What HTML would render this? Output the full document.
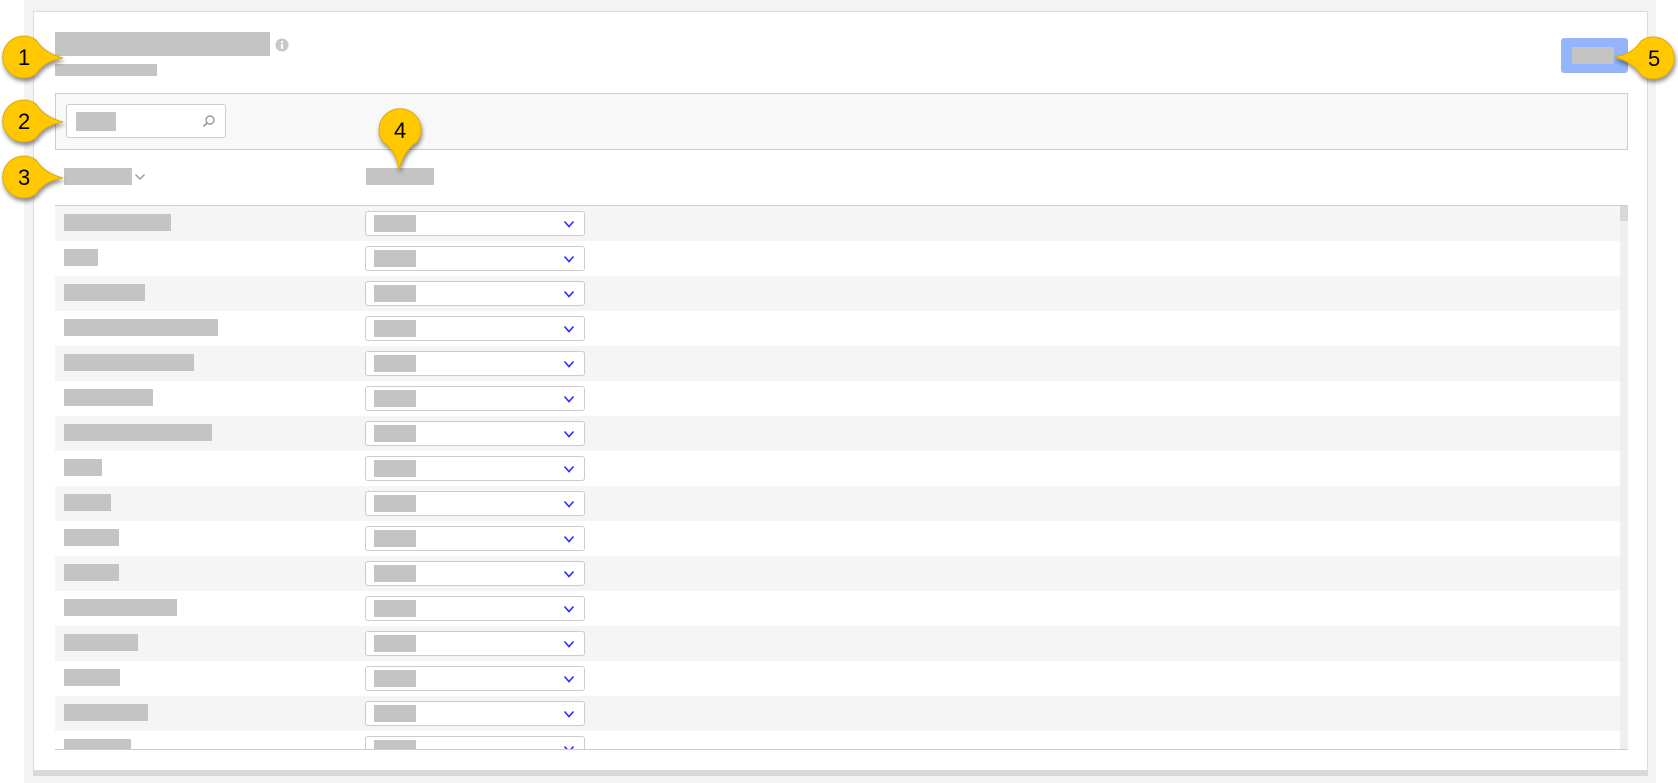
<!DOCTYPE html>
<html><head><meta charset="utf-8"><style>
*{margin:0;padding:0;box-sizing:border-box}
body{width:1678px;height:783px;background:#fff;position:relative;overflow:hidden;font-family:"Liberation Sans",sans-serif}
.a{position:absolute}
.bar{position:absolute;background:#c4c4c4}
.row{position:absolute;left:0;width:1565px;height:35px}
.sel{position:absolute;left:310px;top:5px;width:220px;height:25px;border:1px solid #ccc;border-radius:3px;background:#fff}
.sel .bar{left:8px;top:3px;width:42px;height:17px}
.sel svg{position:absolute;right:9px;top:8px}
.call{position:absolute;overflow:visible}
.call text{font-family:"Liberation Sans",sans-serif;font-size:22px;fill:#000}
</style></head><body>
<div class="a" style="left:24px;top:0;width:1632px;height:783px;background:#f3f3f3"></div>
<div class="a" style="left:33px;top:11px;width:1615px;height:765px;background:#fff;border:1px solid #dcdcdc;border-bottom:6px solid #d9d9d9"></div>
<div class="bar" style="left:55px;top:32px;width:215px;height:24px"></div>
<svg class="a" style="left:275px;top:38px" width="14" height="14"><circle cx="7" cy="7" r="6.5" fill="#c8c8c8"/><rect x="6" y="6" width="2" height="5" fill="#fff"/><rect x="6" y="3" width="2" height="2" fill="#fff"/></svg>
<div class="bar" style="left:55px;top:64px;width:102px;height:12px"></div>
<div class="a" style="left:1561px;top:38px;width:67px;height:35px;background:#94b5fc;border-radius:3px"></div>
<div class="bar" style="left:1572px;top:47px;width:42px;height:17px"></div>
<div class="a" style="left:55px;top:93px;width:1573px;height:57px;background:#f8f8f8;border:1px solid #ccc"></div>
<div class="a" style="left:66px;top:104px;width:160px;height:34px;background:#fff;border:1px solid #ccc;border-radius:3px"></div>
<div class="bar" style="left:76px;top:112px;width:40px;height:19px"></div>
<svg class="a" style="left:202px;top:114px" width="14" height="14"><circle cx="8" cy="6" r="4" fill="none" stroke="#999" stroke-width="1.4"/><line x1="5" y1="9" x2="1.5" y2="12.5" stroke="#999" stroke-width="1.6"/></svg>
<div class="bar" style="left:64px;top:168px;width:68px;height:17px"></div>
<svg class="a" style="left:134px;top:172px" width="12" height="10"><path d="M1.5 2.5 L6 7 L10.5 2.5" fill="none" stroke="#999" stroke-width="1.4"/></svg>
<div class="bar" style="left:366px;top:168px;width:68px;height:17px"></div>
<div class="a" style="left:55px;top:205px;width:1573px;height:545px;border-top:1px solid #ccc;border-bottom:1px solid #ccc;overflow:hidden">
<div class="a" style="left:1565px;top:0;width:8px;height:545px;background:#efefef"></div>
<div class="a" style="left:1565px;top:0;width:8px;height:15px;background:#d8d8d8"></div>
<div id="rows"></div>
</div>
<script>
var w=[107,34,81,154,130,89,148,38,47,55,55,113,74,56,84,67],h='';
for(var i=0;i<16;i++){h+='<div class="row" style="top:'+(i*35)+'px;background:'+(i%2?'#fff':'#f5f5f5')+'"><div class="bar" style="left:9px;top:8px;width:'+w[i]+'px;height:17px"></div><div class="sel"><div class="bar"></div><svg width="12" height="9"><path d="M1.5 1.5 L6 6.5 L10.5 1.5" fill="none" stroke="#2b2bff" stroke-width="1.6"/></svg></div></div>';}
document.getElementById('rows').innerHTML=h;
</script>
<svg class="a" style="left:0;top:0;overflow:visible" width="1678" height="783">
<defs><filter id="s" x="-50%" y="-50%" width="200%" height="200%"><feDropShadow dx="1" dy="3" stdDeviation="2" flood-color="#000" flood-opacity="0.45"/></filter></defs>
<g filter="url(#s)" fill="#ffc800" stroke="#d9a400" stroke-width="0.8">
<path transform="translate(24,57)" d="M39,1 Q20,4 12,17 A21,21 0 1 1 12,-17 Q20,-4 39,1Z"/>
<path transform="translate(24,121)" d="M39,1 Q20,4 12,17 A21,21 0 1 1 12,-17 Q20,-4 39,1Z"/>
<path transform="translate(24,177)" d="M39,1 Q20,4 12,17 A21,21 0 1 1 12,-17 Q20,-4 39,1Z"/>
<path transform="translate(400,130) rotate(90)" d="M40,1 Q20,4 12,17 A21,21 0 1 1 12,-17 Q20,-4 40,1Z"/>
<path transform="translate(1653,58) rotate(180)" d="M39,1 Q20,4 12,17 A21,21 0 1 1 12,-17 Q20,-4 39,1Z"/>
</g>
<g class="call"><text x="18" y="65">1</text><text x="18" y="129">2</text><text x="18" y="185">3</text><text x="394" y="138">4</text><text x="1648" y="66">5</text></g>
</svg>
</body></html>
